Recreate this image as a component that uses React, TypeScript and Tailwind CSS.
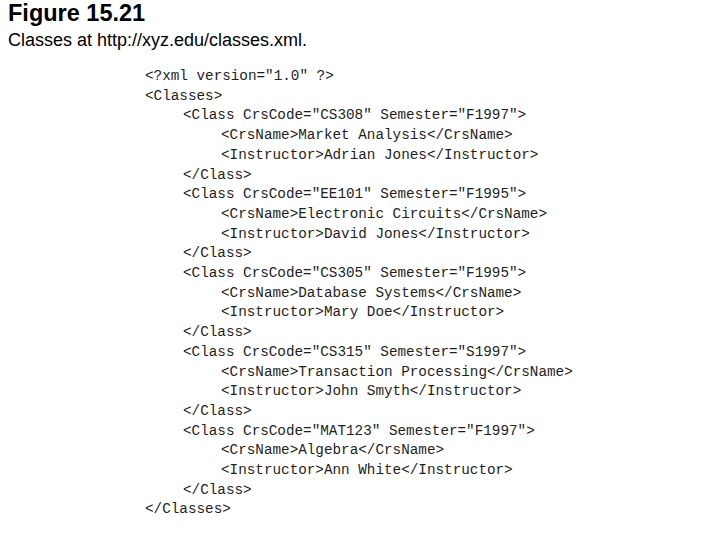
import React from "react";

const lines: [number, string][] = [
  [0, '<?xml version="1.0" ?>'],
  [0, "<Classes>"],
  [1, '<Class CrsCode="CS308" Semester="F1997">'],
  [2, "<CrsName>Market Analysis</CrsName>"],
  [2, "<Instructor>Adrian Jones</Instructor>"],
  [1, "</Class>"],
  [1, '<Class CrsCode="EE101" Semester="F1995">'],
  [2, "<CrsName>Electronic Circuits</CrsName>"],
  [2, "<Instructor>David Jones</Instructor>"],
  [1, "</Class>"],
  [1, '<Class CrsCode="CS305" Semester="F1995">'],
  [2, "<CrsName>Database Systems</CrsName>"],
  [2, "<Instructor>Mary Doe</Instructor>"],
  [1, "</Class>"],
  [1, '<Class CrsCode="CS315" Semester="S1997">'],
  [2, "<CrsName>Transaction Processing</CrsName>"],
  [2, "<Instructor>John Smyth</Instructor>"],
  [1, "</Class>"],
  [1, '<Class CrsCode="MAT123" Semester="F1997">'],
  [2, "<CrsName>Algebra</CrsName>"],
  [2, "<Instructor>Ann White</Instructor>"],
  [1, "</Class>"],
  [0, "</Classes>"],
];

export default function App() {
  return (
    <div className="w-[720px] h-[540px] bg-white overflow-hidden flex flex-col">
      <div className="pl-[8px] pt-0 flex flex-col font-['Liberation_Sans',Arial,sans-serif] text-black">
        <div className="text-[23.5px] font-bold leading-[27px]">Figure 15.21</div>
        <div className="text-[18px] leading-[20px] mt-[3px]">Classes at http://xyz.edu/classes.xml.</div>
      </div>
      <div className="mt-[17px] ml-[145px] flex flex-col font-['Liberation_Mono','Courier_New',monospace] text-[14.3px] leading-[19.7px] text-[#1e1e1e] whitespace-pre">
        {lines.map(([lvl, t], i) => (
          <div
            key={i}
            className={lvl === 0 ? "" : lvl === 1 ? "pl-[38px]" : "pl-[76px]"}
          >
            {t}
          </div>
        ))}
      </div>
    </div>
  );
}
